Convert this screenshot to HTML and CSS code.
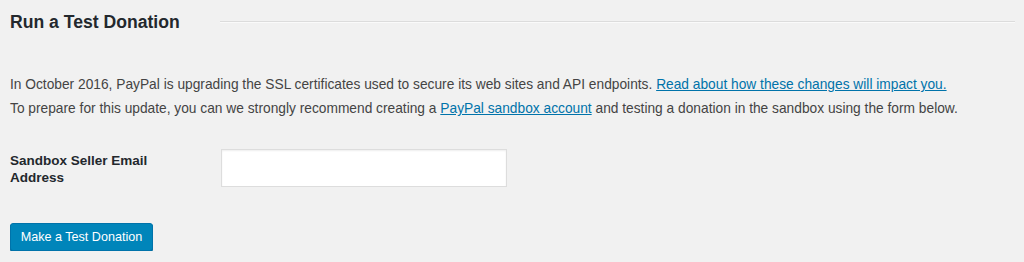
FILE: index.html
```html
<!DOCTYPE html>
<html>
<head>
	<meta charset="utf-8">
	<title>Run a Test Donation</title>
	<link rel="stylesheet" href="styles.css">
</head>
<body>
	<div class="wrap">
		<div class="head">
			<h2>Run a Test Donation</h2>
			<div class="rule"></div>
		</div>

		<div class="notice">
			<p>In October 2016, PayPal is upgrading the SSL certificates used to secure its web sites and API endpoints. <a href="#">Read about how these changes will impact you.</a></p>
			<p>To prepare for this update, you can we strongly recommend creating a <a href="#">PayPal sandbox account</a> and testing a donation in the sandbox using the form below.</p>
		</div>

		<div class="row">
			<label for="email" class="tips">Sandbox Seller Email Address</label>
			<input type="text" name="email" id="email" class="txt">
		</div>

		<div>
			<input type="button" class="button" value="Make a Test Donation">
		</div>
	</div>
</body>
</html>
```

FILE: styles.css
```css
*{
	padding: 0;
	margin: 0;
	box-sizing: border-box;
}
body{
	background: #f1f1f1;
	font-family: "Liberation Sans", Arial, sans-serif;
	font-size: 13.75px;
	color: #444;
}
.wrap{
	padding: 0 9px 0 10px;
}
.head{
	display: flex;
	align-items: center;
	height: 44px;
}
.head>h2{
	width: 200px;
	font-size: 17.6px;
	font-weight: bold;
	color: #23282d;
}
.rule{
	flex: 1;
	height: 2px;
	border-top: 1px solid #dcdcdc;
	border-bottom: 1px solid #fafafa;
	margin-left: 10px;
}
.notice{
	padding-top: 29px;
}
.notice p{
	line-height: 24px;
}
.notice a{
	color: #0073aa;
	text-decoration: underline;
}
.row{
	display: flex;
	align-items: flex-start;
	margin-top: 28px;
}
.tips{
	width: 211px;
	padding-top: 3px;
	padding-right: 40px;
	font-size: 13.5px;
	font-weight: bold;
	color: #23282d;
	line-height: 17px;
}
.txt{
	width: 286px;
	height: 38px;
	background: #fff;
	border: 1px solid #ddd;
	box-shadow: inset 0 1px 2px rgba(0,0,0,0.07);
	outline: none;
}
.button{
	margin-top: 36px;
	height: 28px;
	width: 143px;
	font-family: "Liberation Sans", Arial, sans-serif;
	font-size: 12.6px;
	color: #fff;
	background: #0085ba;
	border: 1px solid #0073aa;
	border-radius: 3px;
	box-shadow: 0 1px 0 #006799;
}
```
